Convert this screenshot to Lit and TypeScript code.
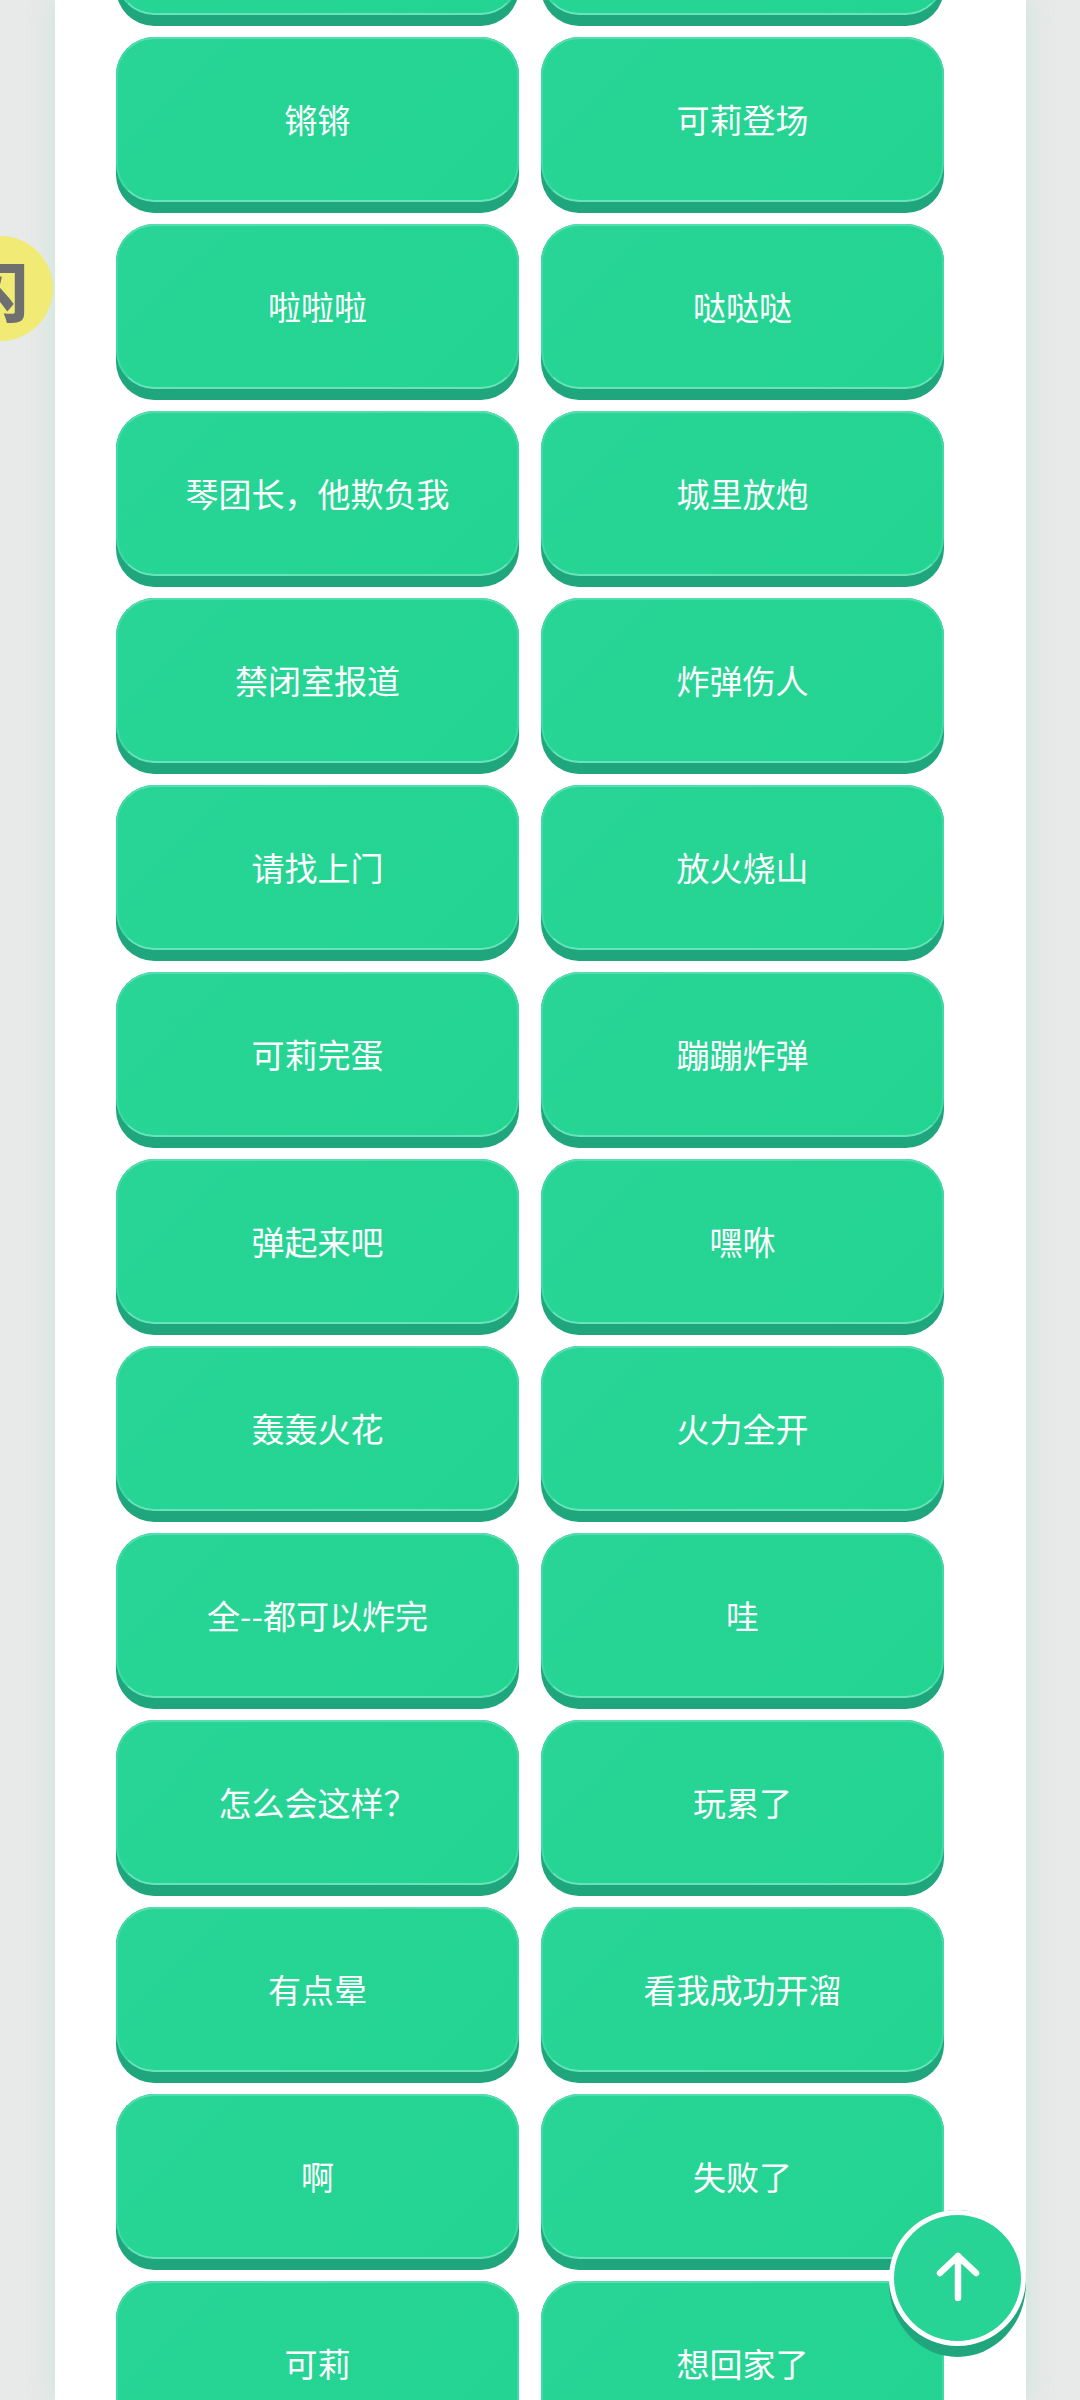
import { LitElement, html, css } from "lit";
import { customElement } from "lit/decorators.js";

const ROWS: [string, string][] = [
  ["", ""],
  ["锵锵", "可莉登场"],
  ["啦啦啦", "哒哒哒"],
  ["琴团长，他欺负我", "城里放炮"],
  ["禁闭室报道", "炸弹伤人"],
  ["请找上门", "放火烧山"],
  ["可莉完蛋", "蹦蹦炸弹"],
  ["弹起来吧", "嘿咻"],
  ["轰轰火花", "火力全开"],
  ["全--都可以炸完", "哇"],
  ["怎么会这样？", "玩累了"],
  ["有点晕", "看我成功开溜"],
  ["啊", "失败了"],
  ["可莉", "想回家了"],
];

@customElement("app-root")
export class AppRoot extends LitElement {
  static styles = css`
    :host {
      display: block;
      position: relative;
      width: 1080px;
      height: 2400px;
      overflow: hidden;
      background: #e8e9e9;
      font-family: "Noto Sans CJK SC", "Noto Sans", sans-serif;
    }
    .panel {
      width: 971px;
      height: 2400px;
      margin-left: 55px;
      background: #fff;
      overflow: hidden;
      box-shadow: 0 0 24px rgba(150, 225, 195, 0.4);
    }
    .grid {
      display: grid;
      grid-template-columns: 403px 403px;
      column-gap: 22px;
      row-gap: 11px;
      padding-left: 61px;
      margin-top: -150px;
    }
    .btn {
      box-sizing: border-box;
      height: 176px;
      border-radius: 38px;
      padding-bottom: 11px;
      background: #20a67c;
      display: flex;
    }
    .face {
      box-sizing: border-box;
      flex: 1;
      border-radius: 38px;
      border: 2px solid #3fdaa5;
      border-top-color: #54deb0;
      border-bottom-color: #68e4bb;
      padding-bottom: 2px;
      background: linear-gradient(135deg, #28d597 0%, #23d491 100%);
      color: #fff;
      font-size: 33px;
      font-weight: 400;
      display: flex;
      align-items: center;
      justify-content: center;
    }
    .top {
      position: absolute;
      left: 889px;
      top: 2210px;
      width: 137px;
      height: 147px;
      border-radius: 50%;
      background: #20a67c;
    }
    .top-face {
      box-sizing: border-box;
      width: 137px;
      height: 136px;
      border-radius: 50%;
      border: 5px solid #fff;
      background: linear-gradient(135deg, #29d398, #26d494);
      display: flex;
      align-items: center;
      justify-content: center;
    }
    .top-face svg {
      width: 44px;
      height: 52px;
      margin-top: -3px;
    }
    .flash {
      position: absolute;
      left: -52px;
      top: 236px;
      width: 105px;
      height: 105px;
      border-radius: 50%;
      background: #f1eb75;
      color: #6f6f6f;
      font-size: 64px;
      font-weight: 900;
      line-height: 105px;
      text-indent: -8px;
      text-align: center;
      overflow: hidden;
    }
  `;

  render() {
    return html`
      <div class="panel">
        <div class="grid">
          ${ROWS.map(
            (r) => html`
              <div class="btn"><div class="face">${r[0]}</div></div>
              <div class="btn"><div class="face">${r[1]}</div></div>
            `
          )}
        </div>
      </div>
      <div class="flash">闪</div>
      <div class="top">
        <div class="top-face">
          <svg viewBox="0 0 44 52" fill="none" stroke="#fff" stroke-width="6.5" stroke-linecap="round" stroke-linejoin="round">
            <path d="M22 47V5M4 22L22 5L40 22" />
          </svg>
        </div>
      </div>
    `;
  }
}
